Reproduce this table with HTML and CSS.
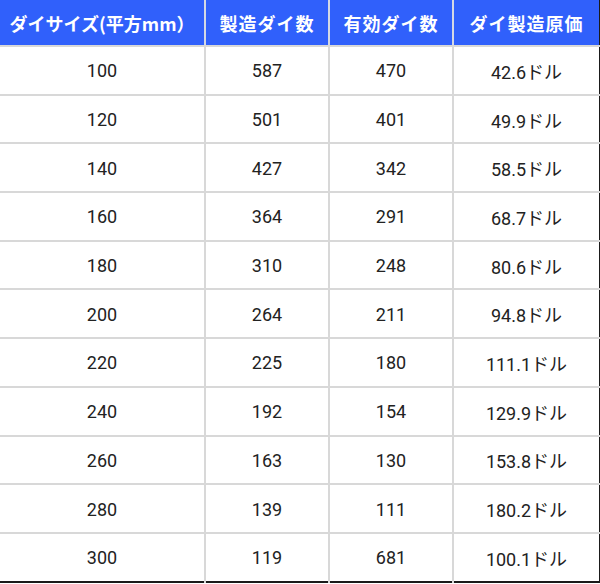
FILE: index.html
```html
<!DOCTYPE html>
<html lang="ja">
<head>
<meta charset="utf-8">
<link rel="stylesheet" href="styles.css">
</head>
<body>
<table class="dies">
  <colgroup>
    <col class="c1"><col class="c2"><col class="c3"><col class="c4">
  </colgroup>
  <thead>
    <tr><th>ダイサイズ(平方mm）</th><th class="sp">製造ダイ数</th><th class="sp">有効ダイ数</th><th class="sp">ダイ製造原価</th></tr>
  </thead>
  <tbody>
    <tr><td>100</td><td>587</td><td>470</td><td>42.6ドル</td></tr>
    <tr><td>120</td><td>501</td><td>401</td><td>49.9ドル</td></tr>
    <tr><td>140</td><td>427</td><td>342</td><td>58.5ドル</td></tr>
    <tr><td>160</td><td>364</td><td>291</td><td>68.7ドル</td></tr>
    <tr><td>180</td><td>310</td><td>248</td><td>80.6ドル</td></tr>
    <tr><td>200</td><td>264</td><td>211</td><td>94.8ドル</td></tr>
    <tr><td>220</td><td>225</td><td>180</td><td>111.1ドル</td></tr>
    <tr><td>240</td><td>192</td><td>154</td><td>129.9ドル</td></tr>
    <tr><td>260</td><td>163</td><td>130</td><td>153.8ドル</td></tr>
    <tr><td>280</td><td>139</td><td>111</td><td>180.2ドル</td></tr>
    <tr><td>300</td><td>119</td><td>681</td><td>100.1ドル</td></tr>
  </tbody>
</table>
</body>
</html>
```
FILE: styles.css
```css
html, body {
  margin: 0;
  padding: 0;
  background: #ffffff;
}
.dies {
  border-collapse: collapse;
  table-layout: fixed;
  width: 600px;
  font-family: Roboto, "Noto Sans CJK JP", sans-serif;
  color: #222222;
  border-right: 2px solid #1a1a1a;
  border-bottom: 2px solid #1a1a1a;
}
.c1 { width: 205px; }
.c2 { width: 124px; }
.c3 { width: 124px; }
.c4 { width: 147px; }
.dies th {
  background: #3060fb;
  color: #ffffff;
  font-family: "Noto Sans CJK JP", sans-serif;
  font-weight: 700;
  font-size: 18px;
  height: 46px;
  padding: 0;
  text-align: center;
  border-left: 2px solid #d4d8e4;
  border-bottom: 2px solid #d8d8d8;
  box-sizing: border-box;
}
.dies th.sp { letter-spacing: 1px; }
.dies th:first-child { border-left: none; }
.dies td {
  height: 48.7px;
  box-sizing: border-box;
  padding: 1px 0 0;
  text-align: center;
  font-size: 18px;
  border-left: 2px solid #d8d8d8;
  border-bottom: 2px solid #d8d8d8;
}
.dies td:first-child { border-left: none; }
.dies tbody tr:last-child td { border-bottom: none; }
```
